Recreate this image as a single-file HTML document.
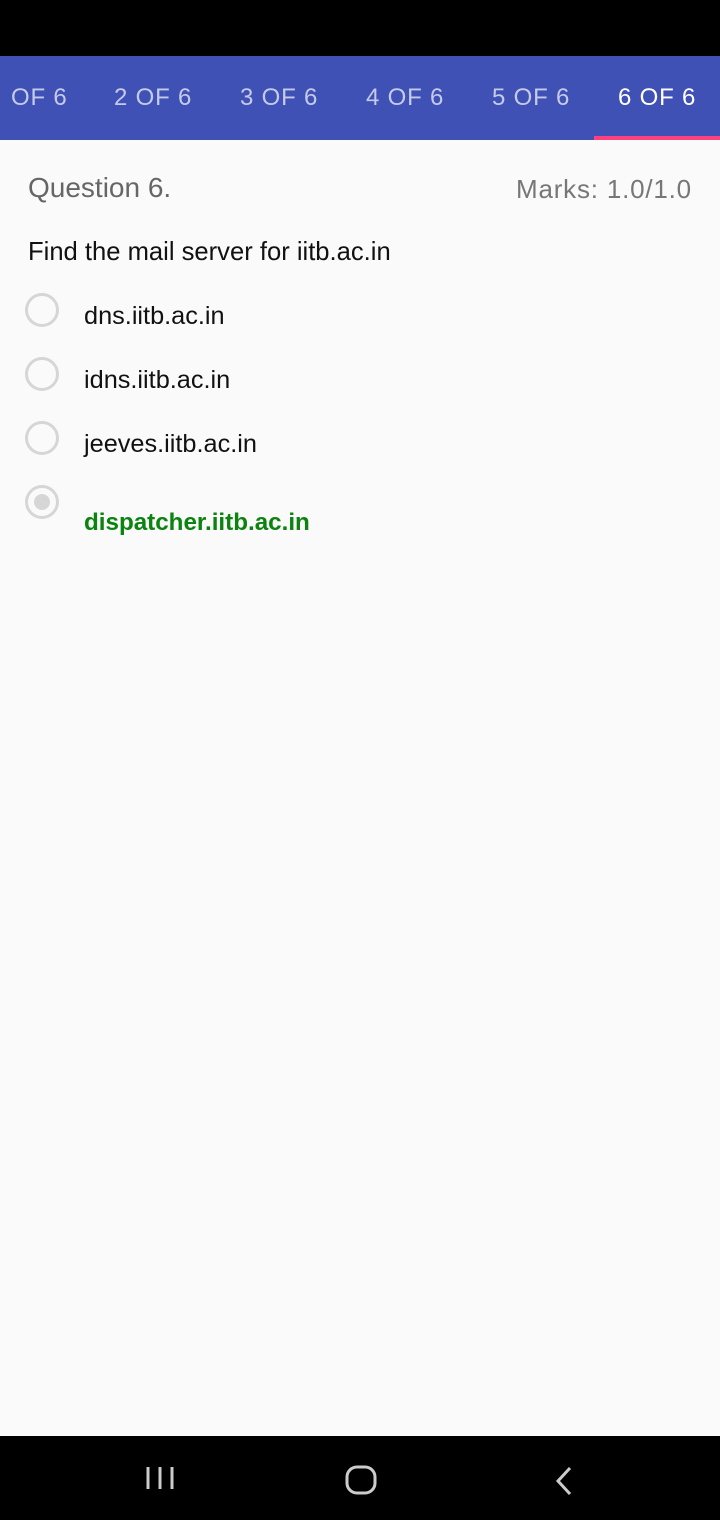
<!DOCTYPE html>
<html><head><meta charset="utf-8"><style>
*{margin:0;padding:0;box-sizing:border-box}
body{width:720px;height:1520px;background:#fafafa;font-family:"Liberation Sans",sans-serif;position:relative;overflow:hidden}
.top{position:absolute;left:0;top:0;width:720px;height:56px;background:#000}
.tabs{position:absolute;left:0;top:56px;width:720px;height:84px;background:#3f51b5}
.tab{position:absolute;top:28px;font-size:24px;color:#c5cae9;letter-spacing:0.8px;white-space:nowrap}
.ind{position:absolute;left:594px;top:136px;width:126px;height:4px;background:#ff4081}
.t{position:absolute;white-space:nowrap}
.r{position:absolute;left:25px;width:34px;height:34px;border:3px solid #d6d6d6;border-radius:50%}
.bot{position:absolute;left:0;top:1436px;width:720px;height:84px;background:#000}
</style></head><body>
<div class="top"></div>
<div class="tabs">
<div class="tab" style="left:11px">OF 6</div>
<div class="tab" style="left:114px">2 OF 6</div>
<div class="tab" style="left:240px">3 OF 6</div>
<div class="tab" style="left:366px">4 OF 6</div>
<div class="tab" style="left:492px">5 OF 6</div>
<div class="tab" style="left:618px;color:#fff">6 OF 6</div>
</div>
<div class="ind"></div>
<div class="t" style="left:28px;top:172px;font-size:28px;color:#666">Question 6.</div>
<div class="t" style="left:516px;top:174px;font-size:26px;letter-spacing:0.8px;color:#777">Marks: 1.0/1.0</div>
<div class="t" style="left:28px;top:238px;font-size:25.6px;color:#111">Find the mail server for iitb.ac.in</div>
<div class="r" style="top:293px"></div>
<div class="t" style="left:84px;top:302px;font-size:25.3px;color:#111">dns.iitb.ac.in</div>
<div class="r" style="top:357px"></div>
<div class="t" style="left:84px;top:366px;font-size:25.3px;color:#111">idns.iitb.ac.in</div>
<div class="r" style="top:421px"></div>
<div class="t" style="left:84px;top:430px;font-size:25.3px;color:#111">jeeves.iitb.ac.in</div>
<div class="r" style="top:485px"><div style="position:absolute;left:6px;top:6px;width:16px;height:16px;border-radius:50%;background:#d6d6d6"></div></div>
<div class="t" style="left:84px;top:509px;font-size:24.2px;color:#0a830f;font-weight:bold">dispatcher.iitb.ac.in</div>
<div class="bot">
<svg width="720" height="84" style="position:absolute;left:0;top:0">
<g stroke="#ccc" stroke-width="3" fill="none">
<line x1="148" y1="31" x2="148" y2="53"/><line x1="160" y1="31" x2="160" y2="53"/><line x1="172" y1="31" x2="172" y2="53"/>
<rect x="347" y="31" width="28" height="26" rx="10"/>
<polyline points="570,32 558,45 570,58"/>
</g></svg>
</div>
</body></html>
